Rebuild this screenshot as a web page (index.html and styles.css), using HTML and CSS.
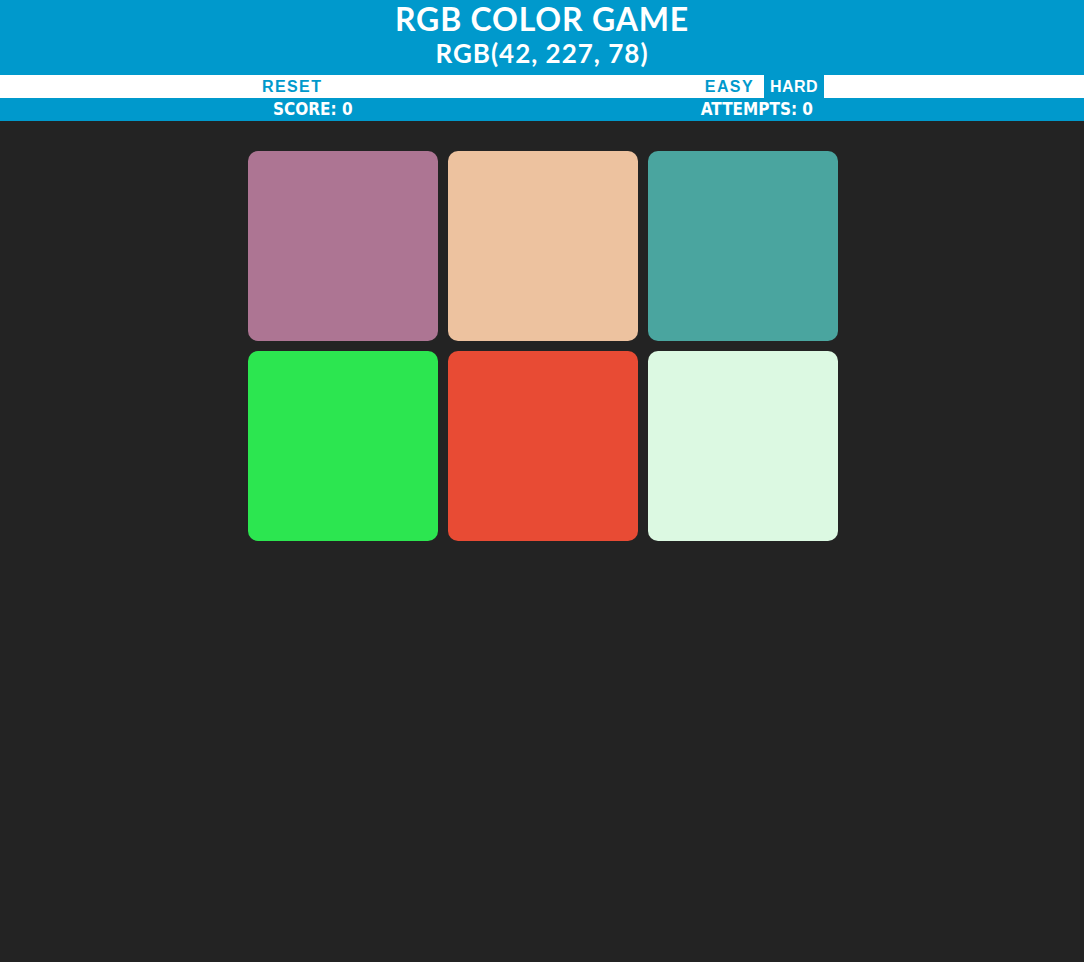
FILE: index.html
```html
<!DOCTYPE html>
<html>
<head>
<meta charset="utf-8">
<link rel="stylesheet" href="styles.css">
</head>
<body>
<header class="header">
  <h1 class="title">RGB COLOR GAME</h1>
  <div class="target">RGB(42, 227, 78)</div>
</header>
<nav class="nav">
  <div class="nav-inner">
    <button class="btn reset">RESET</button>
    <div class="modes">
      <button class="btn">EASY</button>
      <button class="btn selected">HARD</button>
    </div>
  </div>
</nav>
<div class="stats">
  <div class="stats-inner">
    <span class="score">SCORE: 0</span>
    <span class="attempts">ATTEMPTS: 0</span>
  </div>
</div>
<main class="board">
  <div class="square" style="background:#ad7593"></div>
  <div class="square" style="background:#edc29f"></div>
  <div class="square" style="background:#4aa59f"></div>
  <div class="square" style="background:#2ce650"></div>
  <div class="square" style="background:#e84b34"></div>
  <div class="square" style="background:#dcf9e2"></div>
</main>
</body>
</html>
```

FILE: styles.css
```css
html, body {
  margin: 0;
  padding: 0;
  background: #232323;
  font-family: "Noto Sans", "Open Sans", sans-serif;
}
.header {
  background: #0099cc;
  color: #fff;
  text-align: center;
  height: 75px;
  box-sizing: border-box;
  padding-top: 2px;
}
.title {
  margin: 0;
  font-family: Lato, "Noto Sans", sans-serif;
  font-size: 32px;
  line-height: 34px;
  font-weight: 700;
  letter-spacing: 0.8px;
}
.target {
  font-family: Lato, "Noto Sans", sans-serif;
  font-size: 26px;
  line-height: 34px;
  font-weight: 700;
  letter-spacing: 1px;
}
.nav {
  background: #fff;
  height: 23px;
}
.nav-inner {
  width: 572px;
  margin-left: calc(50% - 292px);
  padding-left: 2px;
  display: flex;
  justify-content: space-between;
  height: 23px;
}
.btn {
  border: none;
  background: none;
  color: #0099cc;
  font-family: "Liberation Sans", Arial, sans-serif;
  font-weight: 700;
  font-size: 16px;
  letter-spacing: 1.4px;
  padding: 0 10px;
  height: 23px;
  line-height: 23px;
  cursor: pointer;
}
.modes {
  display: flex;
}
.btn.selected {
  background: #0099cc;
  color: #fff;
  letter-spacing: 0.5px;
  padding: 0 5px;
  width: 60px;
}
.stats {
  background: #0099cc;
  height: 23px;
  color: #fff;
}
.stats-inner {
  width: 540px;
  margin: 0 auto;
  padding-left: 2px;
  display: flex;
  justify-content: space-between;
  font-family: "DejaVu Sans Condensed", "DejaVu Sans", sans-serif;
  font-weight: 700;
  font-size: 17px;
  line-height: 23px;
}
.board {
  width: 590px;
  margin: 30px 0 0 calc(50% - 294px);
  display: grid;
  grid-template-columns: repeat(3, 190px);
  gap: 10px;
}
.square {
  width: 190px;
  height: 190px;
  border-radius: 10px;
}
```
